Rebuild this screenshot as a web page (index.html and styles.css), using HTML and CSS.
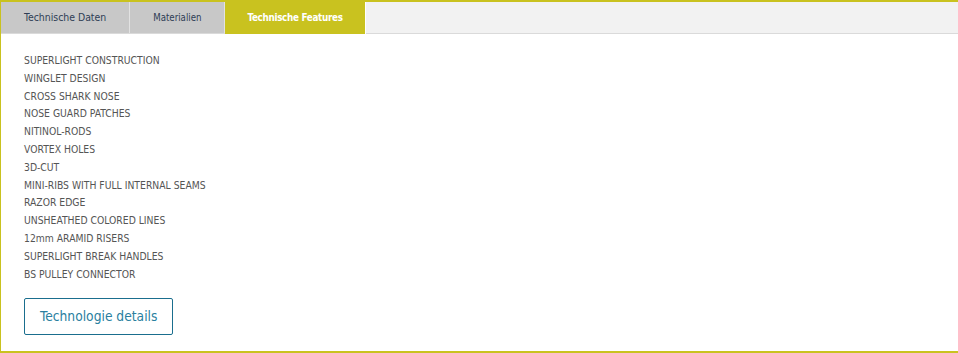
FILE: index.html
```html
<!DOCTYPE html>
<html>
	<head>
		<meta charset="UTF-8">
		<title>Technische Features</title>
		<link rel="stylesheet" href="styles.css">
	</head>

	<body>
		<div class="tabs">
			<ul class="tab-nav">
				<li class="tab">Technische Daten</li>
				<li class="tab">Materialien</li>
				<li class="tab active">Technische Features</li>
			</ul>
			<div class="tab-body">
				<ul class="features">
					<li>SUPERLIGHT CONSTRUCTION</li>
					<li>WINGLET DESIGN</li>
					<li>CROSS SHARK NOSE</li>
					<li>NOSE GUARD PATCHES</li>
					<li>NITINOL-RODS</li>
					<li>VORTEX HOLES</li>
					<li>3D-CUT</li>
					<li>MINI-RIBS WITH FULL INTERNAL SEAMS</li>
					<li>RAZOR EDGE</li>
					<li>UNSHEATHED COLORED LINES</li>
					<li>12mm ARAMID RISERS</li>
					<li>SUPERLIGHT BREAK HANDLES</li>
					<li>BS PULLEY CONNECTOR</li>
				</ul>
				<a class="btn-details" href="#">Technologie details</a>
			</div>
		</div>
	</body>

</html>
```

FILE: styles.css
```css
/* Tab-Box mit gelbem Rahmen, drei Reiter oben */
body {
	margin: 0;
	font-family: "DejaVu Sans", "Open Sans", sans-serif;
	font-stretch: condensed;
}

.tabs {
	height: 353px;
	box-sizing: border-box;
	border: 1px solid #c9c21f;
	border-top-width: 2px;
	border-bottom-width: 2px;
	border-right: none;
	display: flex;
	flex-direction: column;
}

.tab-nav {
	display: flex;
	margin: 0;
	padding: 0;
	list-style: none;
	height: 31px;
	background-color: #f2f2f2;
	border-bottom: 1px solid #dadada;
}

.tab {
	height: 31px;
	line-height: 31px;
	padding: 0 23px;
	font-size: 10.4px;
	color: #2e3d55;
	background-color: #c8c8c8;
	border-right: 1px solid #e2e2e2;
}

.tab:nth-child(2) {
	font-size: 9.6px;
}

.tab.active {
	color: #fff;
	font-weight: bold;
	font-size: 9.8px;
	letter-spacing: -0.3px;
	padding: 0 22px;
	background-color: #c9c21f;
	height: 32px;
	margin-bottom: -1px;
	border-right-color: #fff;
}

.tab-body {
	padding: 18px 23px 17px;
}

.features {
	margin: 0;
	padding: 0;
	list-style: none;
	font-size: 10.3px;
	line-height: 17.8px;
	color: #555;
}

.btn-details {
	display: inline-block;
	margin-top: 15px;
	height: 37px;
	line-height: 35px;
	box-sizing: border-box;
	padding: 0 15px;
	border: 1px solid #1a6e8e;
	border-radius: 2px;
	font-size: 13.7px;
	color: #2a7fa0;
	text-decoration: none;
}
```
